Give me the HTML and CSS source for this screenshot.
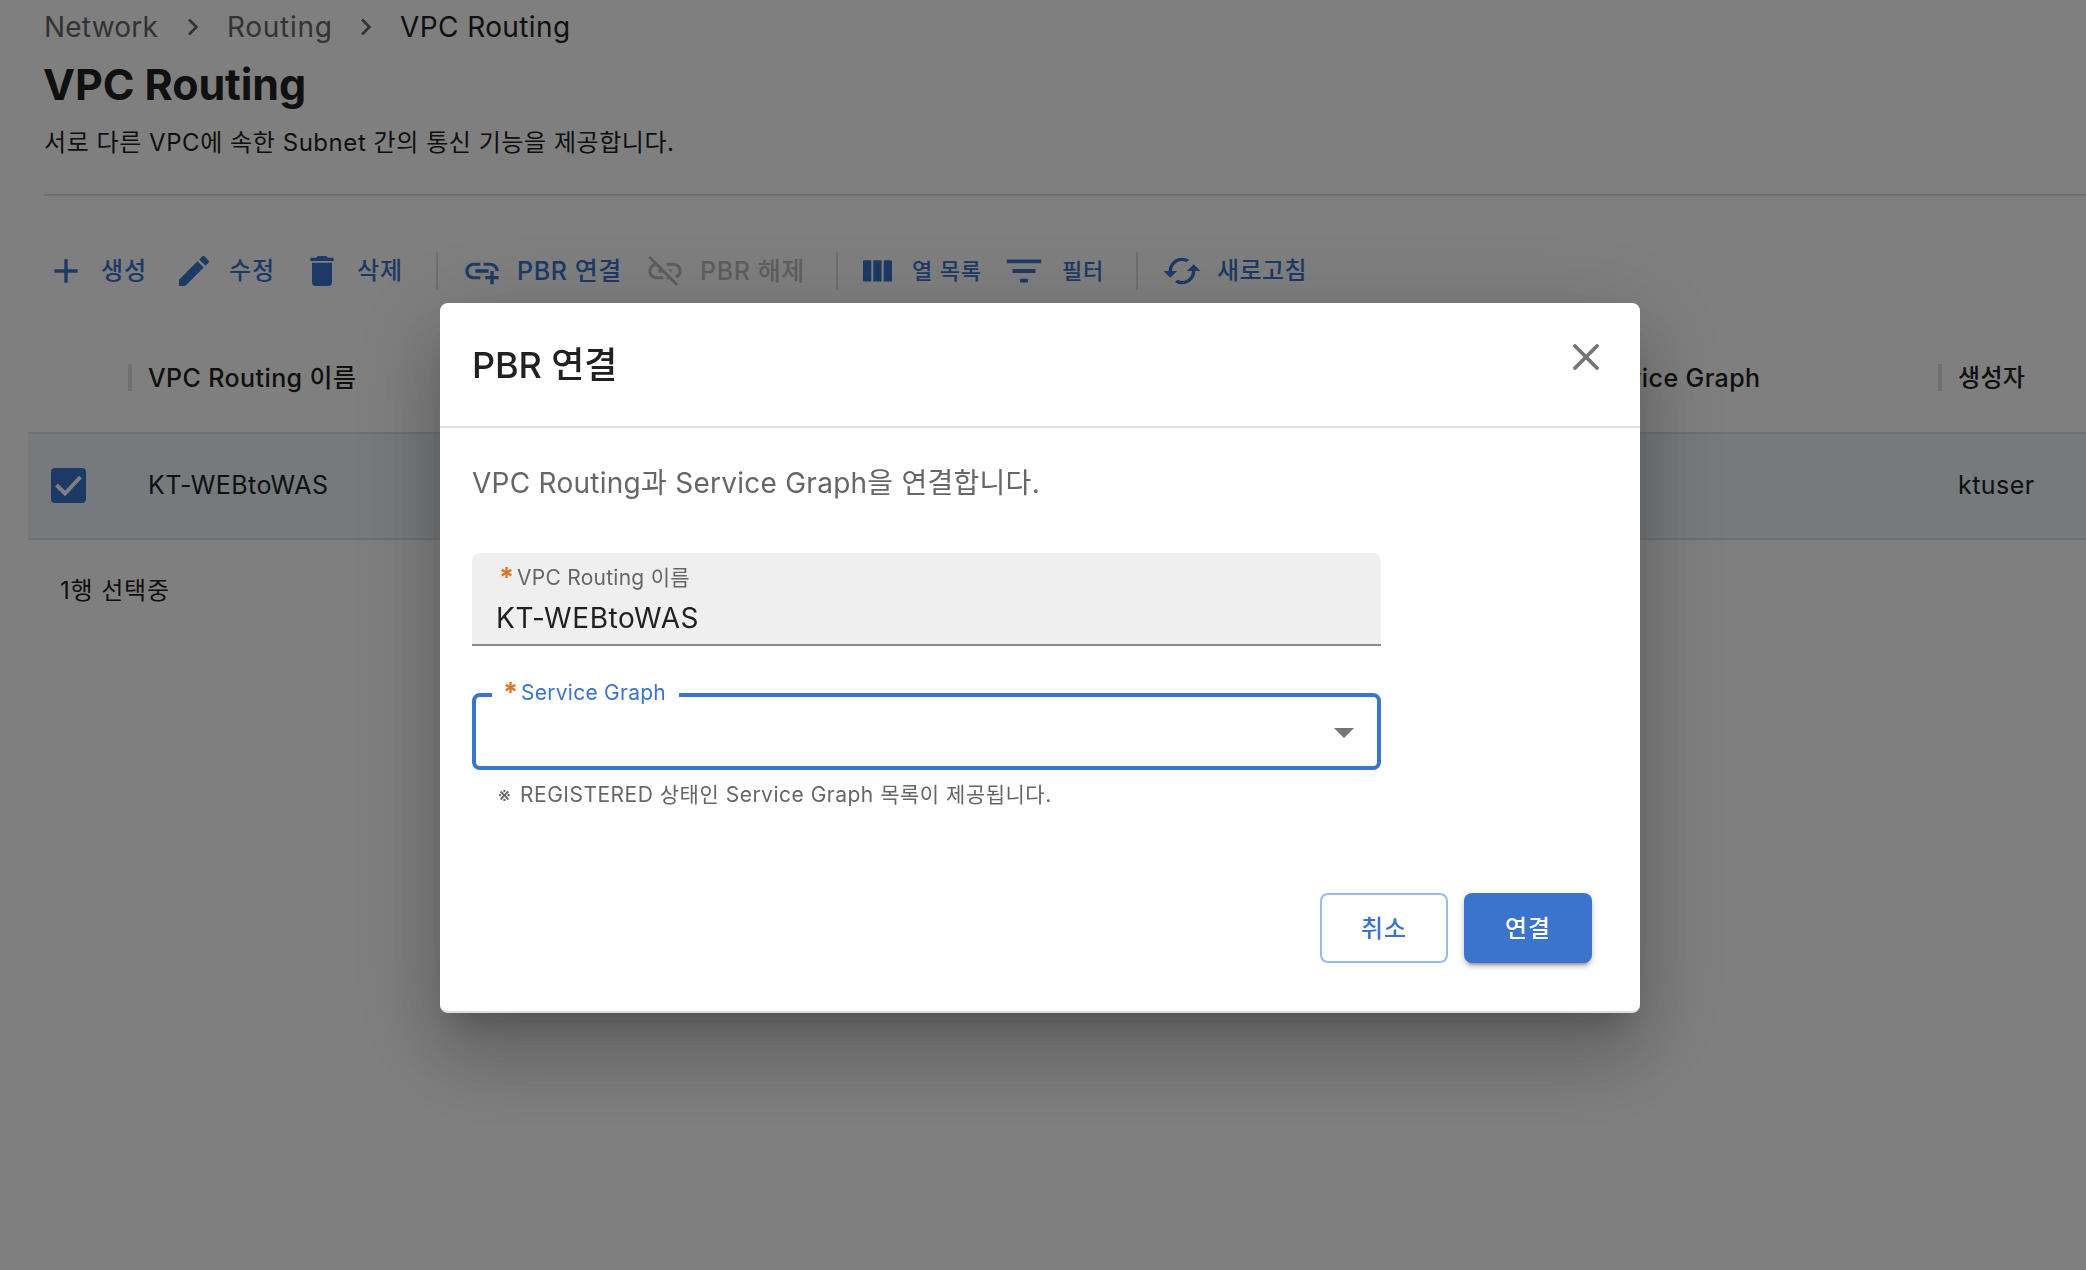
FILE: index.html
```html
<!DOCTYPE html>
<html lang="ko">
<head>
<meta charset="utf-8">
<title>VPC Routing</title>
<link rel="stylesheet" href="styles.css">
</head>
<body>
<main class="page">
  <nav class="breadcrumb">
    <a class="crumb crumb-network">Network</a>
    <svg class="chevron" viewBox="0 0 12 18"><path d="M2 1.5 9.5 9 2 16.5"/></svg>
    <a class="crumb crumb-routing">Routing</a>
    <svg class="chevron" viewBox="0 0 12 18"><path d="M2 1.5 9.5 9 2 16.5"/></svg>
    <span class="crumb crumb-current">VPC Routing</span>
  </nav>
  <h1 class="title">VPC Routing</h1>
  <p class="description">서로 다른 VPC에 속한 Subnet 간의 통신 기능을 제공합니다.</p>
  <hr class="rule">

  <div class="toolbar">
    <button class="tool"><svg class="icon" viewBox="0 0 24 24"><path d="M19 13h-6v6h-2v-6H5v-2h6V5h2v6h6v2z"/></svg>생성</button>
    <button class="tool"><svg class="icon" viewBox="0 0 24 24"><path d="M3 17.25V21h3.75L17.81 9.94l-3.75-3.75L3 17.25zM20.71 7.04c.39-.39.39-1.02 0-1.41l-2.34-2.34c-.39-.39-1.02-.39-1.41 0l-1.83 1.83 3.75 3.75 1.83-1.83z"/></svg>수정</button>
    <button class="tool"><svg class="icon" viewBox="0 0 24 24"><path d="M6 19c0 1.1.9 2 2 2h8c1.1 0 2-.9 2-2V7H6v12zM19 4h-3.5l-1-1h-5l-1 1H5v2h14V4z"/></svg>삭제</button>
    <span class="divider"></span>
    <button class="tool tool-pbr"><svg class="icon" viewBox="0 0 24 24"><path d="M8 11h8v2H8v-2zm12.1 1H22c0-2.76-2.24-5-5-5h-4v1.9h4c1.71 0 3.1 1.39 3.1 3.1zM3.9 12c0-1.71 1.39-3.1 3.1-3.1h4V7H7c-2.76 0-5 2.24-5 5s2.24 5 5 5h4v-1.9H7c-1.71 0-3.1-1.39-3.1-3.1zM19 12h-2v3h-3v2h3v3h2v-3h3v-2h-3v-3z"/></svg>PBR 연결</button>
    <button class="tool tool-pbr" disabled><svg class="icon" viewBox="0 0 24 24"><path d="M17 7h-4v1.9h4c1.71 0 3.1 1.39 3.1 3.1 0 1.43-.98 2.63-2.31 2.98l1.46 1.46C20.88 15.61 22 13.95 22 12c0-2.76-2.24-5-5-5zm-1 4h-2.19l2 2H16zM2 4.27l3.11 3.11C3.29 8.12 2 9.91 2 12c0 2.76 2.24 5 5 5h4v-1.9H7c-1.71 0-3.1-1.39-3.1-3.1 0-1.59 1.21-2.9 2.76-3.07L8.73 11H8v2h2.73L13 15.27V17h1.73l4.01 4L20 19.74 3.27 3 2 4.27z"/></svg>PBR 해제</button>
    <span class="divider"></span>
    <button class="tool tool-small"><svg class="icon" viewBox="0 0 40 40"><rect x="6" y="9.2" width="8.3" height="21.4" rx="1.2"/><rect x="16.3" y="9.2" width="8.3" height="21.4" rx="1.2"/><rect x="26.7" y="9.2" width="8.3" height="21.4" rx="1.2"/></svg>열 목록</button>
    <button class="tool tool-small"><svg class="icon icon-filter" viewBox="0 0 24 24"><path d="M10 18h4v-2h-4v2zM3 6v2h18V6H3zm3 7h12v-2H6v2z"/></svg>필터</button>
    <span class="divider"></span>
    <button class="tool tool-refresh"><svg class="icon" viewBox="0 0 24 24"><path d="m19 8-4 4h3c0 3.31-2.69 6-6 6-1.01 0-1.97-.25-2.8-.7l-1.46 1.46C8.97 19.54 10.43 20 12 20c4.42 0 8-3.58 8-8h3l-4-4zM6 12c0-3.31 2.69-6 6-6 1.01 0 1.97.25 2.8.7l1.46-1.46C15.03 4.46 13.57 4 12 4c-4.42 0-8 3.58-8 8H1l4 4 4-4H6z"/></svg>새로고침</button>
  </div>

  <section class="grid">
    <div class="grid-head">
      <span></span>
      <span class="head-cell">VPC Routing 이름</span>
      <span class="head-cell">Service Graph</span>
      <span class="head-cell head-owner">생성자</span>
    </div>
    <div class="grid-row">
      <span class="check"><svg viewBox="0 0 35 35"><path d="M5.5 17 14 25.5 29.5 9"/></svg></span>
      <span class="cell">KT-WEBtoWAS</span>
      <span class="cell"></span>
      <span class="cell">ktuser</span>
    </div>
    <p class="grid-foot">1행 선택중</p>
  </section>
</main>

<div class="backdrop">
  <section class="dialog" role="dialog">
    <header class="dialog-head">
      <h2 class="dialog-title">PBR 연결</h2>
      <svg class="close" viewBox="0 0 26 26"><path d="M2 2 24 24M24 2 2 24"/></svg>
    </header>
    <div class="dialog-body">
      <p class="dialog-text">VPC Routing과 Service Graph을 연결합니다.</p>
      <div class="filled">
        <div class="label"><span class="star">*</span>VPC Routing 이름</div>
        <div class="value">KT-WEBtoWAS</div>
      </div>
      <fieldset class="select">
        <legend class="legend"><span class="star">*</span>Service Graph</legend>
        <div class="select-content"><svg class="arrow" viewBox="0 0 20 10"><path d="M0 0h20L10 10z"/></svg></div>
      </fieldset>
      <p class="helper"><span class="mark">※</span>REGISTERED 상태인 Service Graph 목록이 제공됩니다.</p>
    </div>
    <footer class="actions">
      <button class="btn btn-outline">취소</button>
      <button class="btn btn-primary">연결</button>
    </footer>
  </section>
</div>
</body>
</html>
```
FILE: styles.css
```css
* { box-sizing: border-box; }

body {
  margin: 0;
  height: 1270px;
  overflow: hidden;
  background: #fff;
  color: #212121;
  font-family: Inter, "Noto Sans CJK KR", sans-serif;
  font-size: 24px;
}

h1, h2, p { margin: 0; }
button { font-family: inherit; border: 0; padding: 0; background: none; }

.page { width: 2086px; }

/* Page heading */
.breadcrumb {
  display: flex;
  align-items: center;
  height: 54px;
  padding-left: 44px;
  font-size: 28px;
  line-height: 54px;
}
.crumb { color: #666; }
.crumb-network { width: 143px; letter-spacing: .22px; }
.crumb-routing { width: 133px; letter-spacing: .7px; }
.crumb-current { color: #212121; letter-spacing: .4px; }
.chevron {
  width: 12px;
  height: 18px;
  margin-right: 28px;
  fill: none;
  stroke: #666;
  stroke-width: 2.6;
}
.title {
  padding: 5px 0 0 43px;
  font-size: 43px;
  font-weight: 700;
  line-height: 50px;
  letter-spacing: -.1px;
}
.description {
  padding: 18px 0 0 44px;
  line-height: 32px;
  letter-spacing: .55px;
}
.rule {
  height: 2px;
  margin: 35px 0 0 44px;
  border: 0;
  background: #dedede;
}

/* Toolbar */
.toolbar {
  display: grid;
  grid-template-columns: 128px 128px 134px 26px 183px 191px 21px 144px 135px 26px 200px;
  grid-template-rows: 40px;
  align-items: center;
  height: 40px;
  margin-top: 55px;
  padding-left: 46px;
}
.tool {
  display: flex;
  align-items: center;
  gap: 15px;
  color: #3a74cc;
  font-size: 24px;
  font-weight: 500;
  line-height: 40px;
  letter-spacing: .9px;
  white-space: nowrap;
}
.tool:disabled { color: #bdbdbd; }
.tool-pbr { font-size: 25px; letter-spacing: .6px; }
.tool-small { font-size: 22px; letter-spacing: .8px; }
.tool-refresh { letter-spacing: .4px; }
.icon { width: 40px; height: 40px; flex: none; fill: currentColor; }
.icon-filter { width: 46px; height: 46px; }
.divider { width: 2px; height: 38px; background: #dedede; }

/* Data grid */
.grid { margin: 33px 0 0 28px; }
.grid-head, .grid-row {
  display: grid;
  grid-template-columns: 100px 1437px 373px 1fr;
  align-items: center;
}
.grid-head { height: 108px; padding-bottom: 2px; font-weight: 500; }
.head-cell {
  height: 27px;
  padding-left: 16px;
  border-left: 4px solid #e0e0e0;
  font-size: 25px;
  line-height: 28px;
  letter-spacing: .4px;
}
.head-owner { font-size: 24px; letter-spacing: .3px; }
.grid-row {
  height: 108px;
  padding-bottom: 2px;
  border: solid #dedede;
  border-width: 2px 0;
  background: #ecf4fa;
}
.check {
  width: 35px;
  height: 35px;
  margin-left: 23px;
  border-radius: 4px;
  background: #3a74cc;
}
.check svg { display: block; fill: none; stroke: #fff; stroke-width: 4; }
.cell { padding-left: 20px; font-size: 25px; letter-spacing: .45px; }
.grid-foot {
  padding: 31px 0 0 32px;
  line-height: 40px;
  letter-spacing: .85px;
}

/* Dialog */
.backdrop {
  position: fixed;
  inset: 0;
  padding: 303px 0 0 440px;
  background: rgba(0, 0, 0, .5);
}
.dialog {
  width: 1200px;
  height: 710px;
  border-bottom: 2px solid #dedede;
  border-radius: 8px;
  background: #fff;
  box-shadow: 0 22px 30px -14px rgba(0, 0, 0, .2),
    0 48px 76px 6px rgba(0, 0, 0, .14),
    0 18px 92px 16px rgba(0, 0, 0, .12);
}
.dialog-head {
  display: flex;
  justify-content: space-between;
  align-items: flex-start;
  height: 125px;
  padding: 41px 41px 0 32px;
  border-bottom: 2px solid #dedede;
}
.dialog-title { font-size: 36px; font-weight: 500; line-height: 42px; letter-spacing: -.1px; }
.close {
  width: 26px;
  height: 26px;
  fill: none;
  stroke: #757575;
  stroke-width: 3.8;
  stroke-linecap: round;
}
.dialog-body { width: 941px; padding: 36px 0 0 32px; }
.dialog-text {
  color: #666;
  font-size: 28px;
  line-height: 38px;
  letter-spacing: .26px;
}
.filled {
  height: 93px;
  margin-top: 51px;
  padding: 12px 24px 0;
  border-bottom: 2px solid #8a8a8a;
  border-radius: 8px 8px 0 0;
  background: #efefef;
}
.label, .legend {
  display: flex;
  font-size: 21px;
  letter-spacing: .26px;
}
.label { padding-left: 3px; color: #666; line-height: 26px; }
.star { width: 18px; color: #dd7328; font-size: 27px; font-weight: 700; }
.value { font-size: 28px; line-height: 54px; letter-spacing: .6px; }
.select {
  height: 88px;
  margin: 36px 0 0;
  padding: 0 23px 0 16px;
  border: 4px solid #3a74cc;
  border-radius: 8px;
}
.legend {
  width: 187px;
  padding: 0 0 4px 11px;
  color: #3a74cc;
  line-height: 22px;
}
.legend .star { width: 18px; }
.select-content {
  display: flex;
  justify-content: flex-end;
  align-items: center;
  height: 50px;
}
.arrow { width: 20px; height: 10px; fill: #757575; }
.helper {
  display: flex;
  padding: 10px 0 0 26px;
  color: #666;
  font-size: 21px;
  line-height: 30px;
  letter-spacing: .5px;
  white-space: nowrap;
}
.mark { width: 22px; font-size: 20px; }
.actions {
  display: flex;
  justify-content: flex-end;
  gap: 16px;
  padding: 83px 48px 0 0;
}
.btn {
  width: 128px;
  height: 70px;
  padding-bottom: 4px;
  border-radius: 8px;
  font-size: 24px;
  font-weight: 500;
  letter-spacing: .9px;
}
.btn-outline { border: 2px solid #9cb9e5; color: #3a74cc; }
.btn-primary {
  background: #3a74cc;
  color: #fff;
  box-shadow: 0 6px 2px -4px rgba(0, 0, 0, .2),
    0 4px 4px rgba(0, 0, 0, .14),
    0 2px 10px rgba(0, 0, 0, .12);
}
```
